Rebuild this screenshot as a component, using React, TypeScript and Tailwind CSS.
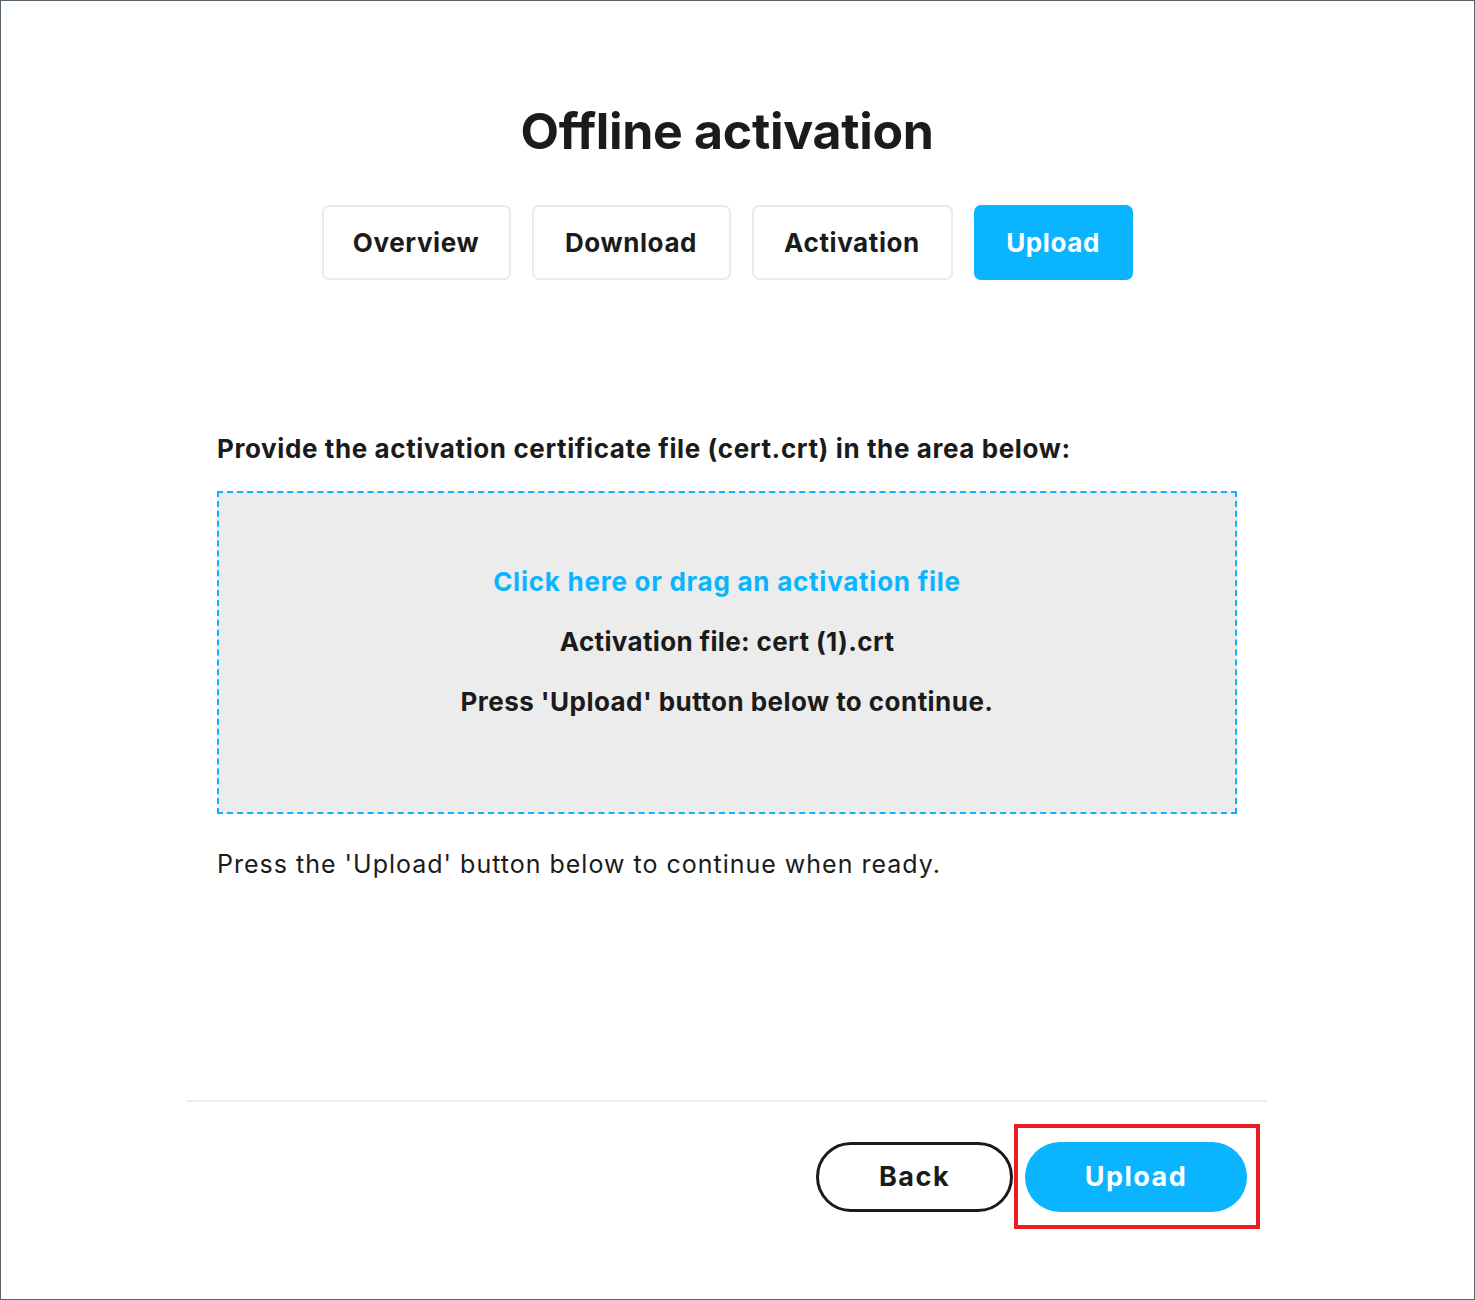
const font = { fontFamily: "Inter, 'Noto Sans', sans-serif" };

const tabs = [
  { label: "Overview", width: "w-[189px]" },
  { label: "Download", width: "w-[199px]" },
  { label: "Activation", width: "w-[201px]" },
  { label: "Upload", width: "w-[159px]", active: true },
];

export default function App() {
  return (
    <div
      className="box-border h-[1300px] w-full border border-[#59636b] bg-white text-[#1b1b1b]"
      style={font}
    >
      <div className="ml-[186px] w-[1080px] pt-[101px]">
        <h1 className="text-center text-[50px] font-bold leading-[58px] tracking-[-0.3px]">
          Offline activation
        </h1>

        <div className="mt-[45px] flex justify-center gap-[21px]">
          {tabs.map((t) => (
            <button
              key={t.label}
              className={`${t.width} h-[75px] rounded-[7px] text-[26px] font-bold tracking-[0.6px] ${
                t.active
                  ? "bg-[#0ab4fe] text-white"
                  : "border-2 border-[#ebebeb] bg-white text-[#1b1b1b]"
              }`}
            >
              {t.label}
            </button>
          ))}
        </div>

        <div className="px-[30px]">
          <p className="mt-[153px] text-[26px] font-bold leading-[32px] tracking-[0.6px]">
            Provide the activation certificate file (cert.crt) in the area below:
          </p>

          <div className="mt-[26px] box-border h-[323px] border-2 border-dashed border-[#0ab4fe] bg-[#ececec] pt-[59px] text-center">
            <p className="text-[26px] font-bold leading-[60px] tracking-[0.75px] text-[#0ab4fe]">
              Click here or drag an activation file
            </p>
            <p className="text-[26px] font-bold leading-[60px] tracking-[0.35px]">
              Activation file: cert (1).crt
            </p>
            <p className="text-[26px] font-bold leading-[60px] tracking-[0.45px]">
              Press 'Upload' button below to continue.
            </p>
          </div>

          <p className="mt-[34px] text-[25px] leading-[32px] tracking-[1px]">
            Press the 'Upload' button below to continue when ready.
          </p>
        </div>

        <div className="mt-[220px] h-[2px] bg-[#ececec]" />

        <div className="mt-[40px] flex justify-end gap-[12px] pr-[20px]">
          <button className="box-border h-[70px] w-[197px] rounded-full border-[3px] border-[#1b1b1b] text-[27px] font-bold tracking-[1.5px]">
            Back
          </button>
          <div className="relative">
            <button className="h-[70px] w-[222px] rounded-full bg-[#0ab4fe] text-[27px] font-bold tracking-[1.5px] text-white">
              Upload
            </button>
            <div className="pointer-events-none absolute -left-[11px] -right-[13px] -top-[18px] -bottom-[17px] border-4 border-[#ec1c24]" />
          </div>
        </div>
      </div>
    </div>
  );
}
